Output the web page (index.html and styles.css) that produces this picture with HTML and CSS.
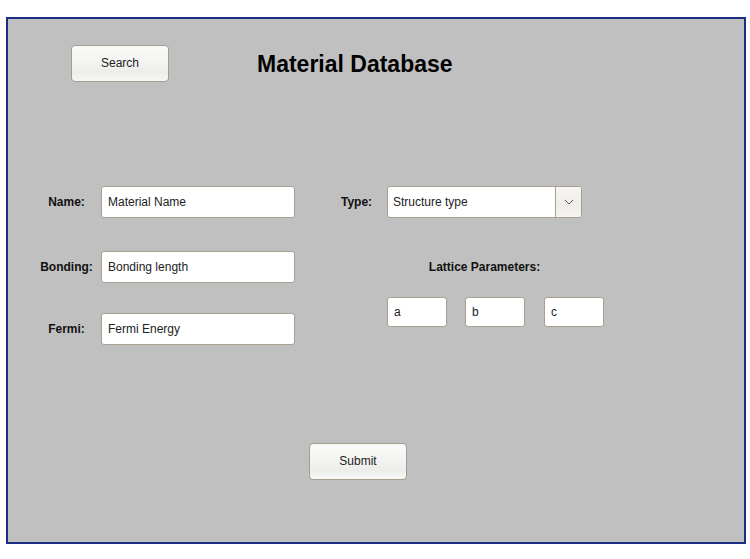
FILE: index.html
```html
<!DOCTYPE html>
<html lang="en">
<head>
<meta charset="utf-8">
<title>Material Database</title>
<link rel="stylesheet" href="styles.css">
</head>
<body>
<div class="frame">
  <div class="header">
    <button class="btn" type="button">Search</button>
    <h1 class="title">Material Database</h1>
  </div>
  <div class="form">
    <div class="col-left">
      <div class="field">
        <label class="label label-left">Name:</label>
        <input class="input input-wide" type="text" value="Material Name">
      </div>
      <div class="field field-mid">
        <label class="label label-left">Bonding:</label>
        <input class="input input-wide" type="text" value="Bonding length">
      </div>
      <div class="field">
        <label class="label label-left">Fermi:</label>
        <input class="input input-wide" type="text" value="Fermi Energy">
      </div>
    </div>
    <div class="col-right">
      <div class="field">
        <label class="label label-right">Type:</label>
        <div class="select">
          <span class="select-text">Structure type</span>
          <span class="select-arrow">
            <svg width="10" height="6" viewBox="0 0 10 6"><path d="M1 1 L5 5 L9 1" fill="none" stroke="#555" stroke-width="1"/></svg>
          </span>
        </div>
      </div>
      <div class="lattice">
        <div class="lattice-label">Lattice Parameters:</div>
        <div class="lattice-row">
          <input class="input input-small" type="text" value="a">
          <input class="input input-small" type="text" value="b">
          <input class="input input-small input-last" type="text" value="c">
        </div>
      </div>
    </div>
  </div>
  <button class="btn btn-submit" type="button">Submit</button>
</div>
</body>
</html>
```
FILE: styles.css
```css
html, body {
  margin: 0;
  padding: 0;
  background: #ffffff;
}
body {
  padding: 17px 0 0 6px;
  font-family: "Liberation Sans", Arial, sans-serif;
  color: #111;
}
.frame {
  box-sizing: border-box;
  width: 740px;
  height: 527px;
  border: 2px solid #1b2f82;
  background: #c0c0c0;
}
.header {
  display: flex;
  align-items: center;
  padding: 26px 0 0 63px;
}
.btn {
  box-sizing: border-box;
  width: 98px;
  height: 37px;
  border: 1px solid #a59c8e;
  border-radius: 4px;
  background: linear-gradient(to bottom, #fafaf8 0%, #f3f3f1 50%, #ececea 75%, #f8f8f7 100%);
  font-family: "Liberation Sans", Arial, sans-serif;
  font-size: 12px;
  color: #222;
  padding: 0 0 1px;
  margin: 0;
}
.title {
  margin: 0 0 0 88px;
  font-size: 23px;
  font-weight: bold;
  line-height: 28px;
  color: #000;
}
.form {
  display: flex;
  align-items: flex-start;
  margin-top: 104px;
  padding-left: 24px;
}
.col-left {
  display: flex;
  flex-direction: column;
}
.field {
  display: flex;
  align-items: center;
  height: 32px;
}
.field-mid {
  margin: 33px 0 30px;
}
.label {
  font-size: 12px;
  font-weight: bold;
  text-align: center;
  color: #111;
}
.label-left {
  width: 69px;
}
.label-right {
  width: 61px;
}
.input {
  box-sizing: border-box;
  border: 1px solid #a9a091;
  border-radius: 3px;
  background: #fff;
  font-family: "Liberation Sans", Arial, sans-serif;
  font-size: 12px;
  color: #222;
  padding: 0 5px 0 6px;
  margin: 0;
  outline: none;
}
.input-wide {
  width: 194px;
  height: 32px;
}
.col-right {
  margin-left: 31px;
  display: flex;
  flex-direction: column;
}
.select {
  box-sizing: border-box;
  width: 195px;
  height: 32px;
  display: flex;
  border: 1px solid #a9a091;
  border-radius: 3px;
  background: #fff;
  overflow: hidden;
}
.select-text {
  flex: 1;
  display: flex;
  align-items: center;
  padding-left: 5px;
  font-size: 12px;
  color: #222;
}
.select-arrow {
  width: 25px;
  display: flex;
  align-items: center;
  justify-content: center;
  border-left: 1px solid #a9a091;
  background: linear-gradient(to bottom, #f7f6f3 0%, #efeeea 60%, #f5f4f1 100%);
}
.lattice {
  margin-left: 61px;
  width: 195px;
}
.lattice-label {
  margin-top: 42px;
  font-size: 12px;
  font-weight: bold;
  line-height: 14px;
  text-align: center;
  color: #111;
}
.lattice-row {
  display: flex;
  column-gap: 18px;
  margin-top: 23px;
}
.input-small {
  width: 60px;
  height: 30px;
  flex: none;
}
.input-last {
  margin-left: 1px;
}
.btn-submit {
  display: block;
  margin: 98px 0 0 301px;
}
```
